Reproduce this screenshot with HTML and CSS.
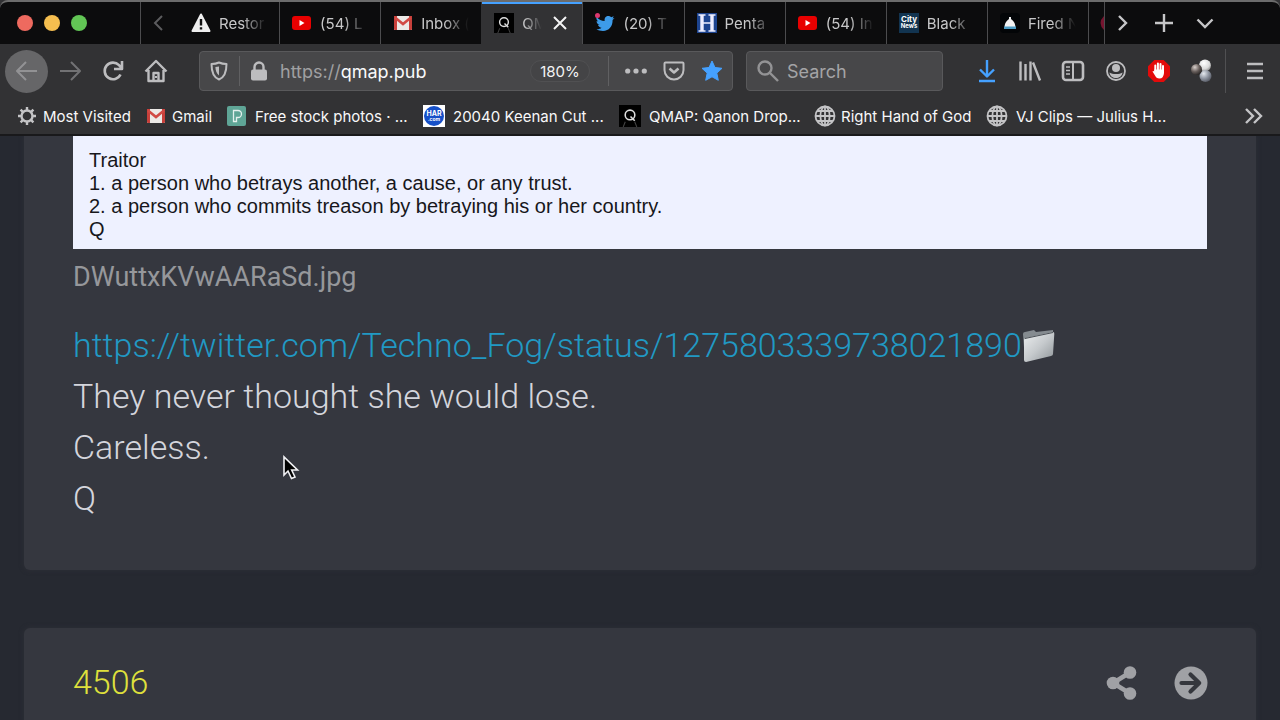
FILE: index.html
```html
<!DOCTYPE html>
<html lang="en">
<head>
<meta charset="utf-8">
<title>QMAP</title>
<link rel="stylesheet" href="styles.css">
</head>
<body>
<svg class="defs" aria-hidden="true">
  <defs>
    <radialGradient id="ballDark" cx=".35" cy=".3" r=".8"><stop offset="0" stop-color="#d8d0cc"/><stop offset=".5" stop-color="#685f5c"/><stop offset="1" stop-color="#1c1a1a"/></radialGradient>
    <radialGradient id="ballLight" cx=".4" cy=".3" r=".8"><stop offset="0" stop-color="#fff"/><stop offset=".6" stop-color="#dadada"/><stop offset="1" stop-color="#777"/></radialGradient>
    <radialGradient id="ballBlue" cx=".35" cy=".3" r=".8"><stop offset="0" stop-color="#e4e8ee"/><stop offset=".5" stop-color="#9298a4"/><stop offset="1" stop-color="#4c505a"/></radialGradient>
    <linearGradient id="folderFront" x1="0" y1="0" x2="1" y2="1"><stop offset="0" stop-color="#eceeef"/><stop offset=".5" stop-color="#c6cacd"/><stop offset="1" stop-color="#8e9498"/></linearGradient>
    <symbol id="youtube" viewBox="0 0 20 20"><rect x="0" y="3" width="19" height="14" rx="3" fill="#e80000"/><path d="M7.500 7v6l5-3z" fill="#fff"/></symbol>
    <symbol id="gmail" viewBox="0 0 20 20"><rect x="1" y="3" width="18" height="14" rx="1" fill="#ece9e6"/><path d="M1 3h3v14H2a1 1 0 0 1-1-1zM16 3h3v13a1 1 0 0 1-1 1h-2z" fill="#c8403b"/><path d="M2 4.500l8 6.500 8-6.500" fill="none" stroke="#d14a44" stroke-width="2.600"/></symbol>
    <symbol id="qicon" viewBox="0 0 21 21"><rect width="21" height="21" fill="#000"/><circle cx="10.500" cy="9.500" r="4.600" fill="none" stroke="#ddd" stroke-width="1.500"/><path d="M11 11l4 4" stroke="#ddd" stroke-width="1.500"/><path d="M6 16l-2 5M15 16l2 5" stroke="#444"/></symbol>
    <symbol id="globe" viewBox="0 0 22 22"><g fill="none" stroke="#c4c4c6" stroke-width="1.800"><circle cx="11" cy="11" r="9.500"/><ellipse cx="11" cy="11" rx="4.600" ry="9.500"/><path d="M11 1.500v19M1.500 11h19M3 6h16M3 16h16"/></g></symbol>
  </defs>
</svg>

<header class="browser">
  <div class="tabstrip">
    <div class="lights"><i class="light light-red"></i><i class="light light-yellow"></i><i class="light light-green"></i></div>
    <nav class="tabs" aria-label="Tabs">
      <div class="tab tab-first">
        <button class="plain scroll-left" aria-label="Scroll tabs left"><svg width="14" height="20" viewBox="0 0 14 20" fill="none" stroke="#5c5c5e" stroke-width="2"><path d="M11 3l-7 7 7 7"/></svg></button>
        <svg class="favicon" viewBox="0 0 20 20"><path d="M10 1.500L18.500 18h-17z" fill="#eee" stroke="#eee" stroke-width="2" stroke-linejoin="round"/><path d="M10 6v6.500M10 14.200v2.300" stroke="#111" stroke-width="2.400"/></svg>
        <button class="plain tab-title">Restor</button>
      </div>
      <div class="tab"><svg class="favicon"><use href="#youtube"/></svg><button class="plain tab-title">(54) L</button></div>
      <div class="tab"><svg class="favicon"><use href="#gmail"/></svg><button class="plain tab-title">Inbox (</button></div>
      <div class="tab tab-active"><svg class="favicon"><use href="#qicon"/></svg><button class="plain tab-title tab-title-short">QM</button><button class="plain tab-close" aria-label="Close tab"><svg width="16" height="16" viewBox="0 0 16 16" stroke="#f4f4f4" stroke-width="2"><path d="M2 2l12 12M14 2L2 14"/></svg></button></div>
      <div class="tab"><svg class="favicon" viewBox="0 0 20 20"><path d="M1.500 4c2.500 2.600 5 3.800 8.200 4-.8-3.500 2-5.500 4.300-5 1 .2 1.700.6 2.200 1.200l2.600-.9-1.300 2.200 2-.4-1.900 2C17.700 13.500 14 18 8 18c-2.500 0-5-.6-6.500-1.700 2 .1 4-.5 5-1.500-1.700-.2-3-1.200-3.500-2.700h1.700C2.800 11.400 1.600 10 1.600 8l1.700.4C1.800 7.200 1 5.700 1.500 4z" fill="#3d9be9"/><circle cx="2.500" cy="2.500" r="2.500" fill="#dc386e"/></svg><button class="plain tab-title">(20) T</button></div>
      <div class="tab"><svg class="favicon" viewBox="0 0 20 20"><rect width="20" height="20" fill="#1d448f"/><path d="M1.500 2h7M11.500 2h7M1.500 18h7M11.500 18h7M5 10h10" stroke="#eef" stroke-width="1.500"/><path d="M5 2v16M15 2v16" stroke="#eef" stroke-width="3.400"/></svg><button class="plain tab-title">Penta</button></div>
      <div class="tab"><svg class="favicon"><use href="#youtube"/></svg><button class="plain tab-title">(54) In</button></div>
      <div class="tab"><svg class="favicon" viewBox="0 0 20 20"><rect width="20" height="20" fill="#123450"/><text class="city" x="10" y="9" text-anchor="middle">City</text><text class="city city-news" x="10" y="15" text-anchor="middle">News</text></svg><button class="plain tab-title">Black</button></div>
      <div class="tab"><svg class="favicon" viewBox="0 0 20 20"><rect width="20" height="20" rx="4" fill="#030507"/><path d="M4.500 14c.4-4.500 2-5.800 4.500-8V4h2v2c2.500 2.200 4.100 3.500 4.500 8z" fill="#f2f2f2"/><path d="M4 13.500h12V16H4z" fill="#4b9bc4"/></svg><button class="plain tab-title">Fired N</button></div>
      <div class="tab tab-cut"><svg width="4" height="16" viewBox="0 0 4 16"><path d="M4 1Q-3 8 4 15z" fill="#76142f"/></svg></div>
    </nav>
    <div class="strip-tools">
      <button class="plain" aria-label="Scroll tabs right"><svg width="20" height="20" viewBox="0 0 20 20"><path d="M6 3l7 7-7 7"/></svg></button>
      <button class="plain" aria-label="New tab"><svg width="20" height="20" viewBox="0 0 20 20"><path d="M10 1v18M1 10h18"/></svg></button>
      <button class="plain" aria-label="List all tabs"><svg width="20" height="20" viewBox="0 0 20 20"><path d="M2.500 6.500L10 14l7.500-7.500"/></svg></button>
    </div>
  </div>

  <div class="toolbar">
    <button class="plain tool" aria-label="Back"><span class="back-disc"><svg class="line dim" viewBox="0 0 24 24"><path d="M22 12H3M11 3l-9 9 9 9"/></svg></span></button>
    <button class="plain tool" aria-label="Forward"><svg class="line faint" viewBox="0 0 24 24"><path d="M2 12h19M13 3l9 9-9 9"/></svg></button>
    <button class="plain tool" aria-label="Reload"><svg class="line" viewBox="0 0 24 24"><path d="M19.500 15.500A8.300 8.300 0 1 1 18 6.200L20.500 9M21 2v8h-8" stroke-width="2.600"/></svg></button>
    <button class="plain tool" aria-label="Home"><svg class="line" viewBox="0 0 24 24"><path d="M1.500 12.500L12 2l10.500 10.500M4.500 11v11h15V11M9.500 22v-8h5v8" stroke-width="2.400"/><path d="M12 17v2" /></svg></button>
    <div class="urlbar">
      <svg class="line small" viewBox="0 0 20 20"><path d="M10 1.500c2.500 1.200 5 1.500 7.500 1.500 0 7-1 13-7.500 15.500C3.500 16 2.500 10 2.500 3 5 3 7.500 2.700 10 1.500z"/><path d="M10 5.500v9c-2.500-2-3.500-5-3.600-8.500 1.300 0 2.500-.2 3.600-.5z" fill="#bdbdbf" stroke="none"/></svg>
      <i class="rule"></i>
      <svg class="lock" width="18" height="20" viewBox="0 0 18 20"><rect x="1" y="8.500" width="16" height="11" rx="2" fill="#bdbdbf"/><path d="M4.500 9V6a4.500 4.500 0 0 1 9 0v3" fill="none" stroke="#bdbdbf" stroke-width="2.400"/></svg>
      <label class="scheme" for="address">https://</label><input class="address" id="address" value="qmap.pub">
      <button class="zoom">180%</button>
      <i class="rule"></i>
      <div class="page-actions">
        <button class="plain" aria-label="Page actions"><svg width="22" height="22" viewBox="0 0 22 22" fill="#bdbdbf"><circle cx="2.700" cy="11" r="2.600"/><circle cx="11" cy="11" r="2.600"/><circle cx="19.300" cy="11" r="2.600"/></svg></button>
        <button class="plain" aria-label="Save to Pocket"><svg class="line pocket" viewBox="0 0 22 22"><path d="M2.500 2.500h17q1 0 1 1V10a9.500 9.500 0 0 1-19 0V3.500q0-1 1-1z"/><path d="M6.500 8.500L11 12.500l4.500-4" stroke-width="2.600"/></svg></button>
        <button class="plain" aria-label="Bookmark this page"><svg width="22" height="22" viewBox="0 0 22 22"><path d="M11 1l3 6.500 7 .8-5.200 4.800 1.500 7.200L11 16.800l-6.300 3.500 1.500-7.200L1 8.300l7-.8z" fill="#45a1ff" stroke="#45a1ff" stroke-linejoin="round"/></svg></button>
      </div>
    </div>
    <div class="searchbar">
      <svg width="22" height="22" viewBox="0 0 22 22" fill="none" stroke="#939395" stroke-width="2.400"><circle cx="8" cy="8" r="6.500"/><path d="M13 13l8 8"/></svg>
      <input class="search" aria-label="Search" placeholder="Search">
    </div>
    <div class="tool-group">
      <button class="plain tool" aria-label="Downloads"><svg class="line blue" viewBox="0 0 24 24"><path d="M12 1v16M5 10.500l7 7 7-7M4 22h16"/></svg></button>
      <button class="plain tool" aria-label="Library"><svg class="line library" viewBox="0 0 24 24"><path d="M2.500 2.500v19M7.500 5v16.500M12.500 2.500v19M15 3.500l7 18"/></svg></button>
      <button class="plain tool" aria-label="Sidebars"><svg class="line" viewBox="0 0 24 24"><rect x="2" y="3" width="20" height="18" rx="3" stroke-width="2.600"/><path d="M12 4v16"/><path d="M5 8h4M5 11.500h4M5 15h4" stroke-width="1.500"/></svg></button>
      <button class="plain tool" aria-label="Account"><svg viewBox="0 0 24 24" width="24" height="24"><circle cx="12" cy="12" r="9" fill="none" stroke="#bdbdbf" stroke-width="1.800"/><circle cx="12" cy="9" r="4" fill="#bdbdbf"/><path d="M5.500 13.500c2 1.200 3.500 1.500 6.500 1.500s4.500-.3 6.500-1.500c-.5 4-3.500 5.500-6.500 5.500s-6-1.500-6.500-5.500z" fill="#bdbdbf"/></svg></button>
      <button class="plain tool" aria-label="Ad blocker"><svg viewBox="0 0 24 24" width="24" height="24"><path d="M7.300 1h9.400L23 7.300v9.400L16.700 23H7.300L1 16.700V7.300z" fill="#e30b0b"/><path d="M8.300 12V6.500M10.900 11V4.500M13.500 11V5M16 12V7" stroke="#fff" stroke-width="2" stroke-linecap="round"/><path d="M7.300 10.500H17V14q-.5 5.500-4.500 5.500c-2.500 0-3.500-1-4.500-3l-2.500-4q.5-1 1.800 0z" fill="#fff"/></svg></button>
      <button class="plain tool" aria-label="Color extension"><svg viewBox="0 0 24 24" width="24" height="24"><circle cx="15" cy="6.500" r="6" fill="url(#ballLight)"/><circle cx="15.500" cy="17" r="6" fill="url(#ballBlue)"/><circle cx="6.500" cy="10.500" r="5.500" fill="url(#ballDark)"/></svg></button>
    </div>
    <i class="menu-rule"></i>
    <button class="plain menu" aria-label="Menu"><svg class="line menu-icon" viewBox="0 0 24 24"><path d="M4 5h16M4 12h16M4 19h16"/></svg></button>
  </div>

  <nav class="bookmarks" aria-label="Bookmarks">
    <a class="bookmark" href="#"><svg class="gear" viewBox="0 0 20 20"><g fill="none" stroke="#c4c4c6" stroke-width="2.400"><circle cx="10" cy="10" r="5.500"/><path d="M10 4.500V1M10 15.500V19M4.500 10H1M15.500 10H19M6.100 6.100L3.600 3.600M13.900 13.900l2.500 2.500M13.900 6.100l2.500-2.500M6.100 13.900l-2.500 2.500"/></g></svg>Most Visited</a>
    <a class="bookmark" href="#"><svg><use href="#gmail"/></svg>Gmail</a>
    <a class="bookmark" href="#"><svg viewBox="0 0 20 20"><rect width="19" height="20" rx="2" fill="#5fa596"/><path d="M6.500 4.500H11a3.500 3.500 0 0 1 0 7H9.500v4h-3z" fill="none" stroke="#e3efec" stroke-width="1.300"/></svg>Free stock photos · ...</a>
    <a class="bookmark" href="#"><svg viewBox="0 0 22 22"><rect width="22" height="22" fill="#fff"/><circle cx="11" cy="11" r="10" fill="#1650c8"/><text class="har" x="11" y="11" text-anchor="middle">HAR</text><text class="har har-com" x="11" y="16" text-anchor="middle">.com</text></svg>20040 Keenan Cut ...</a>
    <a class="bookmark" href="#"><svg><use href="#qicon"/></svg>QMAP: Qanon Drop...</a>
    <a class="bookmark bookmark-globe" href="#"><svg><use href="#globe"/></svg>Right Hand of God</a>
    <a class="bookmark" href="#"><svg><use href="#globe"/></svg>VJ Clips — Julius H...</a>
    <button class="plain more" aria-label="More bookmarks"><svg width="20" height="20" viewBox="0 0 20 20" fill="none" stroke="#c4c4c6" stroke-width="2.400"><path d="M2 3l7 7-7 7M10 3l7 7-7 7"/></svg></button>
  </nav>
</header>

<main class="page">
  <article class="card">
    <div class="quote">
      <p>Traitor</p>
      <p>1. a person who betrays another, a cause, or any trust.</p>
      <p>2. a person who commits treason by betraying his or her country.</p>
      <p>Q</p>
    </div>
    <div class="caption">DWuttxKVwAARaSd.jpg</div>
    <div class="post">
      <p class="link-line"><a href="#">https://twitter.com/Techno_Fog/status/1275803339738021890</a><svg width="33" height="34" viewBox="0 0 33 34"><path d="M1 5q0-2 2-2l9-2 2 2L31 1v24L3 32z" fill="#858b90"/><path d="M4 9L31 3q1.500 0 1.300 2L31 25q0 1.500-2 2L4 33q-2 0-2-2V11q0-1.500 2-2z" fill="url(#folderFront)"/><path d="M3 9.500L31 3.500" stroke="#4b5056" stroke-width="1"/></svg></p>
      <p>They never thought she would lose.</p>
      <p>Careless.</p>
      <p>Q</p>
    </div>
  </article>
  <article class="card card-next">
    <h2 class="number">4506</h2>
    <div class="card-actions">
      <button class="plain" aria-label="Share"><svg width="34" height="34" viewBox="0 0 34 34" fill="#a0a1a5"><path d="M25 6.500L8 17l17 10.500" fill="none" stroke="#a0a1a5" stroke-width="4.500"/><circle cx="8" cy="17" r="6.300"/><circle cx="25" cy="6.500" r="6.300"/><circle cx="25" cy="27.500" r="6.300"/></svg></button>
      <button class="plain" aria-label="Open drop"><svg width="34" height="34" viewBox="0 0 34 34"><circle cx="17" cy="17" r="16.500" fill="#a0a1a5"/><path d="M7.500 17H25M16.500 8.500L25.200 17l-8.700 8.500" fill="none" stroke="#35373d" stroke-width="4.200" stroke-linecap="round" stroke-linejoin="round"/></svg></button>
    </div>
  </article>
</main>
<svg class="cursor" width="18" height="26" viewBox="0 0 18 26" aria-hidden="true"><path d="M2 2v18l4-4 3.500 7.500 3.500-1.500-3.300-7H15.500z" fill="#000" stroke="#f1f1f4" stroke-width="1.600"/></svg>
</body>
</html>
```
FILE: styles.css
```css
* { box-sizing: border-box; }
html, body { height: 100%; }
body {
  margin: 0;
  overflow: hidden;
  display: flex;
  flex-direction: column;
  background: #262931;
  font-family: Inter, "Liberation Sans", sans-serif;
}
p, h2 { margin: 0; }
svg { flex: none; display: block; }
.defs { position: absolute; width: 0; height: 0; }
.plain {
  padding: 0;
  border: 0;
  background: none;
  color: inherit;
  font: inherit;
  display: flex;
  align-items: center;
  justify-content: center;
}

.browser { flex: none; background: #323234; border-bottom: 2px solid #19191b; }

/* Tab strip */
.tabstrip {
  display: flex;
  height: 44px;
  background: #0c0c0d;
  border-top: 2px solid #6c6c6c;
  border-radius: 8px 8px 0 0;
}
.lights { display: flex; align-items: center; gap: 11px; width: 140px; padding-left: 17px; flex: none; }
.light { width: 16px; height: 16px; border-radius: 50%; }
.light-red { background: #ee6a5f; }
.light-yellow { background: #f5be4f; }
.light-green { background: #62c655; }
.tabs { display: flex; flex: 1; min-width: 0; overflow: hidden; color: #c8c8c9; font-size: 15px; }
.tab {
  display: flex;
  align-items: center;
  gap: 8px;
  flex: 1 1 101px;
  min-width: 0;
  padding: 0 8px 0 12px;
  border-left: 1px solid #4c4c4e;
}
.tab-first { flex-basis: 139px; padding-left: 10px; }
.tab-active { background: #323234; border-left-color: #323234; box-shadow: inset 0 2px #45a1ff; padding-right: 14px; }
.tab-cut { flex: 0 0 17px; padding: 0; justify-content: flex-end; border-right: 1px solid #4c4c4e; }
.scroll-left { margin-right: 18px; }
.favicon { width: 20px; height: 20px; }
.tab-title {
  flex: 1;
  min-width: 0;
  white-space: nowrap;
  justify-content: flex-start;
  mask-image: linear-gradient(90deg, #000 45%, transparent 92%);
}
.tab-title-short { mask-image: linear-gradient(90deg, #000 10%, transparent 90%); }
.city { font: bold 8px Inter, sans-serif; fill: #fff; }
.city-news { font-size: 6px; }
.strip-tools {
  display: flex;
  align-items: center;
  gap: 21px;
  width: 175px;
  padding-left: 8px;
  flex: none;
  fill: none;
  stroke: #c6c6c8;
  stroke-width: 2.4;
}

/* Navigation toolbar */
.toolbar { display: flex; align-items: center; height: 54px; padding-left: 5px; }
.tool { width: 43px; height: 43px; flex: none; }
.line { width: 24px; height: 24px; fill: none; stroke: #bdbdbf; stroke-width: 2; stroke-linejoin: round; }
.small { width: 20px; height: 20px; }
.pocket { width: 22px; height: 22px; }
.library, .menu-icon { stroke-width: 2.4; }
.dim { stroke: #929294; }
.faint { stroke: #727274; }
.blue { stroke: #45a1ff; stroke-width: 2.4; }
.back-disc {
  display: grid;
  place-items: center;
  width: 43px;
  height: 43px;
  border-radius: 50%;
  background: #666668;
}
.urlbar, .searchbar {
  display: flex;
  align-items: center;
  height: 40px;
  border: 1px solid #59595b;
  border-radius: 4px;
  background: #474749;
}
.urlbar { flex: 1; min-width: 0; margin-left: 22px; padding: 0 9px; }
.searchbar { width: 197px; margin: 0 22px 0 13px; padding-left: 10px; gap: 8px; }
.rule { width: 1px; height: 30px; margin: 0 10px; background: #606062; }
.lock { margin-right: 12px; }
.scheme { color: #a0a0a2; font-size: 18px; }
.address, .search {
  flex: 1;
  min-width: 0;
  padding: 0;
  border: 0;
  outline: 0;
  background: none;
  color: #f9f9fa;
  font: 18px Inter, sans-serif;
}
.search::placeholder { color: #a4a4a6; opacity: 1; }
.zoom {
  width: 60px;
  height: 22px;
  padding: 0;
  border: 1px solid #505052;
  border-radius: 11px;
  background: #444446;
  color: #f4f4f5;
  font: 15px Inter, sans-serif;
  margin-right: 8px;
}
.page-actions { display: flex; gap: 16px; margin-left: 6px; }
.tool-group { display: flex; margin-right: 2px; }
.menu-rule { width: 1px; height: 44px; background: #505052; }
.menu { width: 50px; margin-left: 4px; }

/* Bookmarks bar */
.bookmarks {
  display: grid;
  grid-template-columns: 129px 81px 196px 196px 195px 172px 1fr 53px;
  align-items: center;
  height: 36px;
  padding-left: 17px;
}
.bookmark {
  display: flex;
  align-items: center;
  gap: 6px;
  white-space: nowrap;
  color: #f8f8f9;
  font-size: 15px;
  text-decoration: none;
}
.bookmark svg { width: 20px; height: 20px; }
.bookmark:nth-child(n+3) { gap: 8px; }
.bookmark:nth-child(n+4) svg { width: 22px; height: 22px; }
.bookmarks .bookmark-globe { gap: 5px; }
.har { font: bold 7px Inter, sans-serif; fill: #fff; }
.har-com { font-size: 5px; }

/* Page */
.page { flex: 1; min-height: 0; overflow: hidden; padding: 0 24px; }
.card {
  padding: 0 49px 46px;
  border-radius: 0 0 6px 6px;
  background: #35373f;
  box-shadow: 0 0 5px #2e3038;
}
.quote {
  padding: 13px 16px 8px;
  background: #eef1ff;
  color: #17171b;
  font: 20px/23px "Liberation Sans", Arial, sans-serif;
}
.caption { margin-top: 10px; color: #96979b; font: 27px/36px Roboto, sans-serif; }
.post { margin-top: 25px; color: #d4d5dc; font: 300 34px/51px Roboto, sans-serif; }
.link-line { display: flex; align-items: center; }
.post a { color: #2199c4; text-decoration: none; }
.card-next {
  display: flex;
  align-items: center;
  justify-content: space-between;
  margin-top: 58px;
  padding: 29px 48px 40px 49px;
  border-radius: 6px 6px 0 0;
}
.number { color: #dfe03c; font: 300 34px/51px Roboto, sans-serif; }
.card-actions { display: flex; gap: 35px; }
.cursor { position: absolute; left: 282px; top: 455px; }
```
